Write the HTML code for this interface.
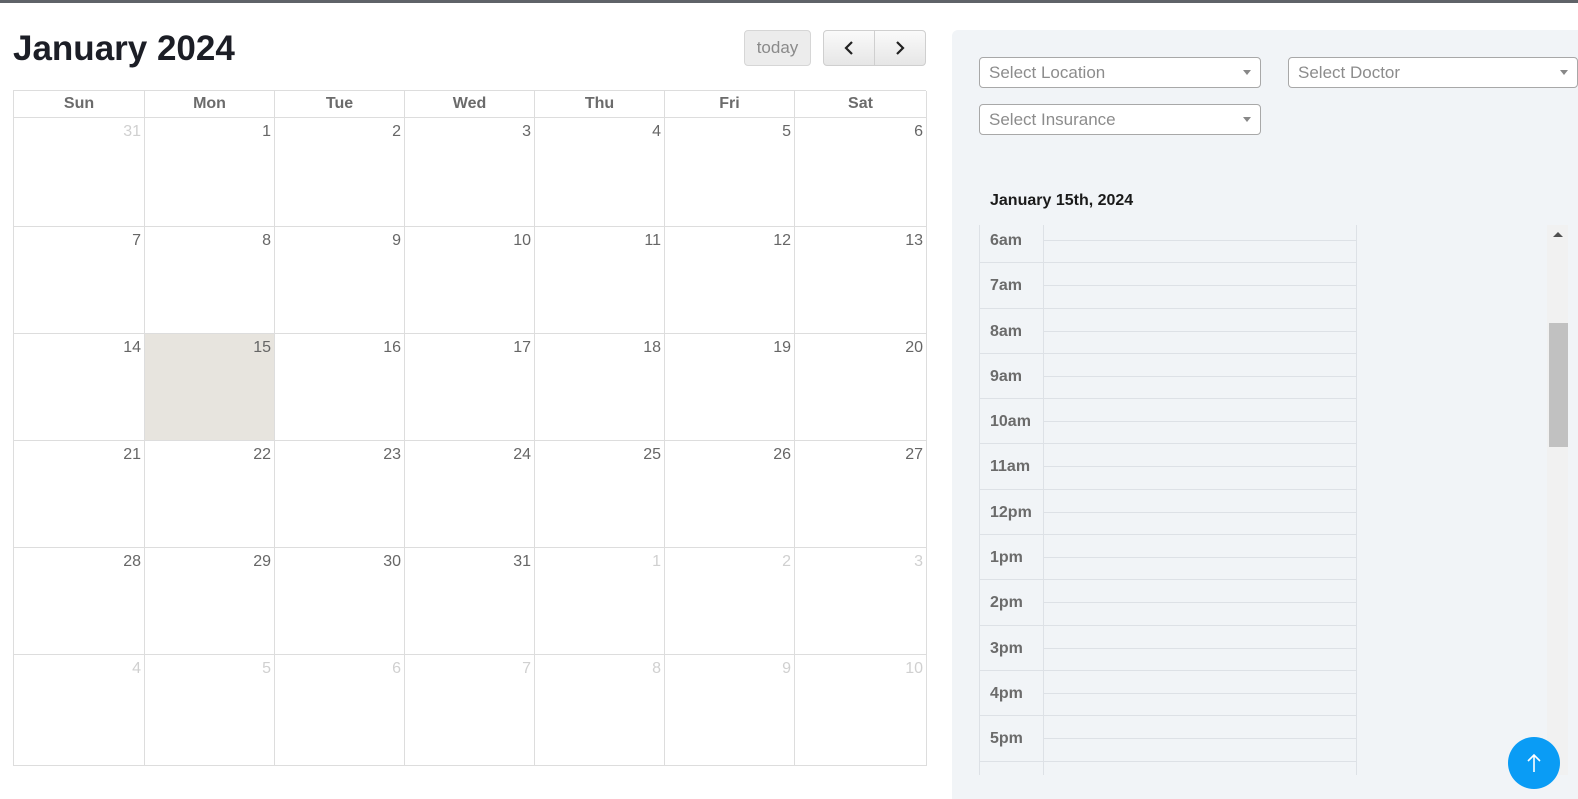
<!DOCTYPE html>
<html><head><meta charset="utf-8"><style>
*{box-sizing:border-box;margin:0;padding:0}
body{width:1578px;height:799px;overflow:hidden;background:#fff;font-family:"Liberation Sans",Arial,sans-serif;position:relative}
.topbar{position:absolute;left:0;top:0;width:1578px;height:3px;background:#5f6368}
h1{position:absolute;left:13px;top:29px;font-size:35px;font-weight:bold;color:#1c1e26;letter-spacing:0}
.today{position:absolute;left:744px;top:30px;width:67px;height:36px;border:1px solid #d6d6d6;border-radius:4px;background:#ececec;color:#8a8a8a;font-size:17px;text-align:center;line-height:34px}
.nav{position:absolute;left:823px;top:30px;width:103px;height:36px;border:1px solid #cfcfcf;border-radius:4px;background:linear-gradient(#fafafa,#e6e6e6);display:flex}
.nav div{flex:1;display:flex;align-items:center;justify-content:center}
.nav div:first-child{border-right:1px solid #cfcfcf}
.cal{position:absolute;left:13px;top:90px;width:913px;display:grid;grid-template-columns:131px 130px 130px 130px 130px 130px 132px;grid-template-rows:27px 109px 107px 107px 107px 107px 111px;border-left:1px solid #ddd;border-top:1px solid #ddd}
.cal>div{border-right:1px solid #ddd;border-bottom:1px solid #ddd;font-size:16px;color:#666;text-align:right;padding:5px 3px 0 0}
.cal>div.h{text-align:center;font-weight:bold;color:#6b6b6b;padding:4px 0 0}
.cal>div.m{color:#d0d0d0}
.cal>div.t{background:#e7e4de}
.panel{position:absolute;left:952px;top:30px;width:626px;height:769px;background:#f1f4f7;border-top-left-radius:6px}
.sel{position:absolute;height:31px;border:1px solid #a8a8a8;border-radius:4px;background:#fff;color:#8c8c8c;font-size:17px;line-height:29px;padding-left:9px}
.sel:after{content:"";position:absolute;right:9px;top:12px;border-left:4px solid transparent;border-right:4px solid transparent;border-top:5px solid #888}
.date{position:absolute;left:990px;top:192px;font-size:16px;font-weight:bold;color:#1a1a1a}
.tg{position:absolute;left:979px;top:225px;width:378px;height:550px;overflow:hidden;border-left:1px solid #dde1e6;border-right:1px solid #dde1e6}
.tg .in{position:absolute;top:-7px;left:0;width:100%}
.slot{height:45.3px;border-bottom:1px solid #dde1e6;position:relative}
.slot:after{content:"";position:absolute;left:64px;right:0;top:22px;border-top:1px solid #dde1e6}
.slot:before{content:"";position:absolute;left:63px;top:0;bottom:-1px;border-left:1px solid #dde1e6}
.slot span{position:absolute;left:10px;top:0;line-height:46px;font-size:16px;font-weight:bold;color:#6b6b6b}
.sb{position:absolute;left:1547px;top:225px;width:21px;height:550px;background:#f1f1f1}
.thumb{position:absolute;left:1549px;top:323px;width:19px;height:124px;background:#c1c1c1}
.up{position:absolute;left:1553px;top:232px;border-left:5px solid transparent;border-right:5px solid transparent;border-bottom:5px solid #505050}
.fab{position:absolute;left:1508px;top:737px;width:52px;height:52px;border-radius:50%;background:#0a9cf5;display:flex;align-items:center;justify-content:center}
</style></head><body>
<div class="topbar"></div>
<h1>January 2024</h1>
<div class="today">today</div>
<div class="nav"><div><svg width="12" height="16" viewBox="0 0 12 16"><path d="M9 2L3 8l6 6" fill="none" stroke="#222" stroke-width="2.2"/></svg></div><div><svg width="12" height="16" viewBox="0 0 12 16"><path d="M3 2l6 6-6 6" fill="none" stroke="#222" stroke-width="2.2"/></svg></div></div>
<div class="cal">
<div class="h">Sun</div><div class="h">Mon</div><div class="h">Tue</div><div class="h">Wed</div><div class="h">Thu</div><div class="h">Fri</div><div class="h">Sat</div>
<div class="m">31</div><div>1</div><div>2</div><div>3</div><div>4</div><div>5</div><div>6</div>
<div>7</div><div>8</div><div>9</div><div>10</div><div>11</div><div>12</div><div>13</div>
<div>14</div><div class="t">15</div><div>16</div><div>17</div><div>18</div><div>19</div><div>20</div>
<div>21</div><div>22</div><div>23</div><div>24</div><div>25</div><div>26</div><div>27</div>
<div>28</div><div>29</div><div>30</div><div>31</div><div class="m">1</div><div class="m">2</div><div class="m">3</div>
<div class="m">4</div><div class="m">5</div><div class="m">6</div><div class="m">7</div><div class="m">8</div><div class="m">9</div><div class="m">10</div>
</div>
<div class="panel"></div>
<div class="sel" style="left:979px;top:57px;width:282px">Select Location</div>
<div class="sel" style="left:1288px;top:57px;width:290px">Select Doctor</div>
<div class="sel" style="left:979px;top:104px;width:282px">Select Insurance</div>
<div class="date">January 15th, 2024</div>
<div class="tg"><div class="in">
<div class="slot"><span>6am</span></div><div class="slot"><span>7am</span></div><div class="slot"><span>8am</span></div><div class="slot"><span>9am</span></div><div class="slot"><span>10am</span></div><div class="slot"><span>11am</span></div><div class="slot"><span>12pm</span></div><div class="slot"><span>1pm</span></div><div class="slot"><span>2pm</span></div><div class="slot"><span>3pm</span></div><div class="slot"><span>4pm</span></div><div class="slot"><span>5pm</span></div><div class="slot"><span></span></div>
</div></div>
<div class="sb"></div><div class="thumb"></div><div class="up"></div>
<div class="fab"><svg width="16" height="22" viewBox="0 0 16 22"><path d="M8 20V3M2 9l6-6 6 6" fill="none" stroke="#fff" stroke-width="1.6"/></svg></div>
</body></html>
